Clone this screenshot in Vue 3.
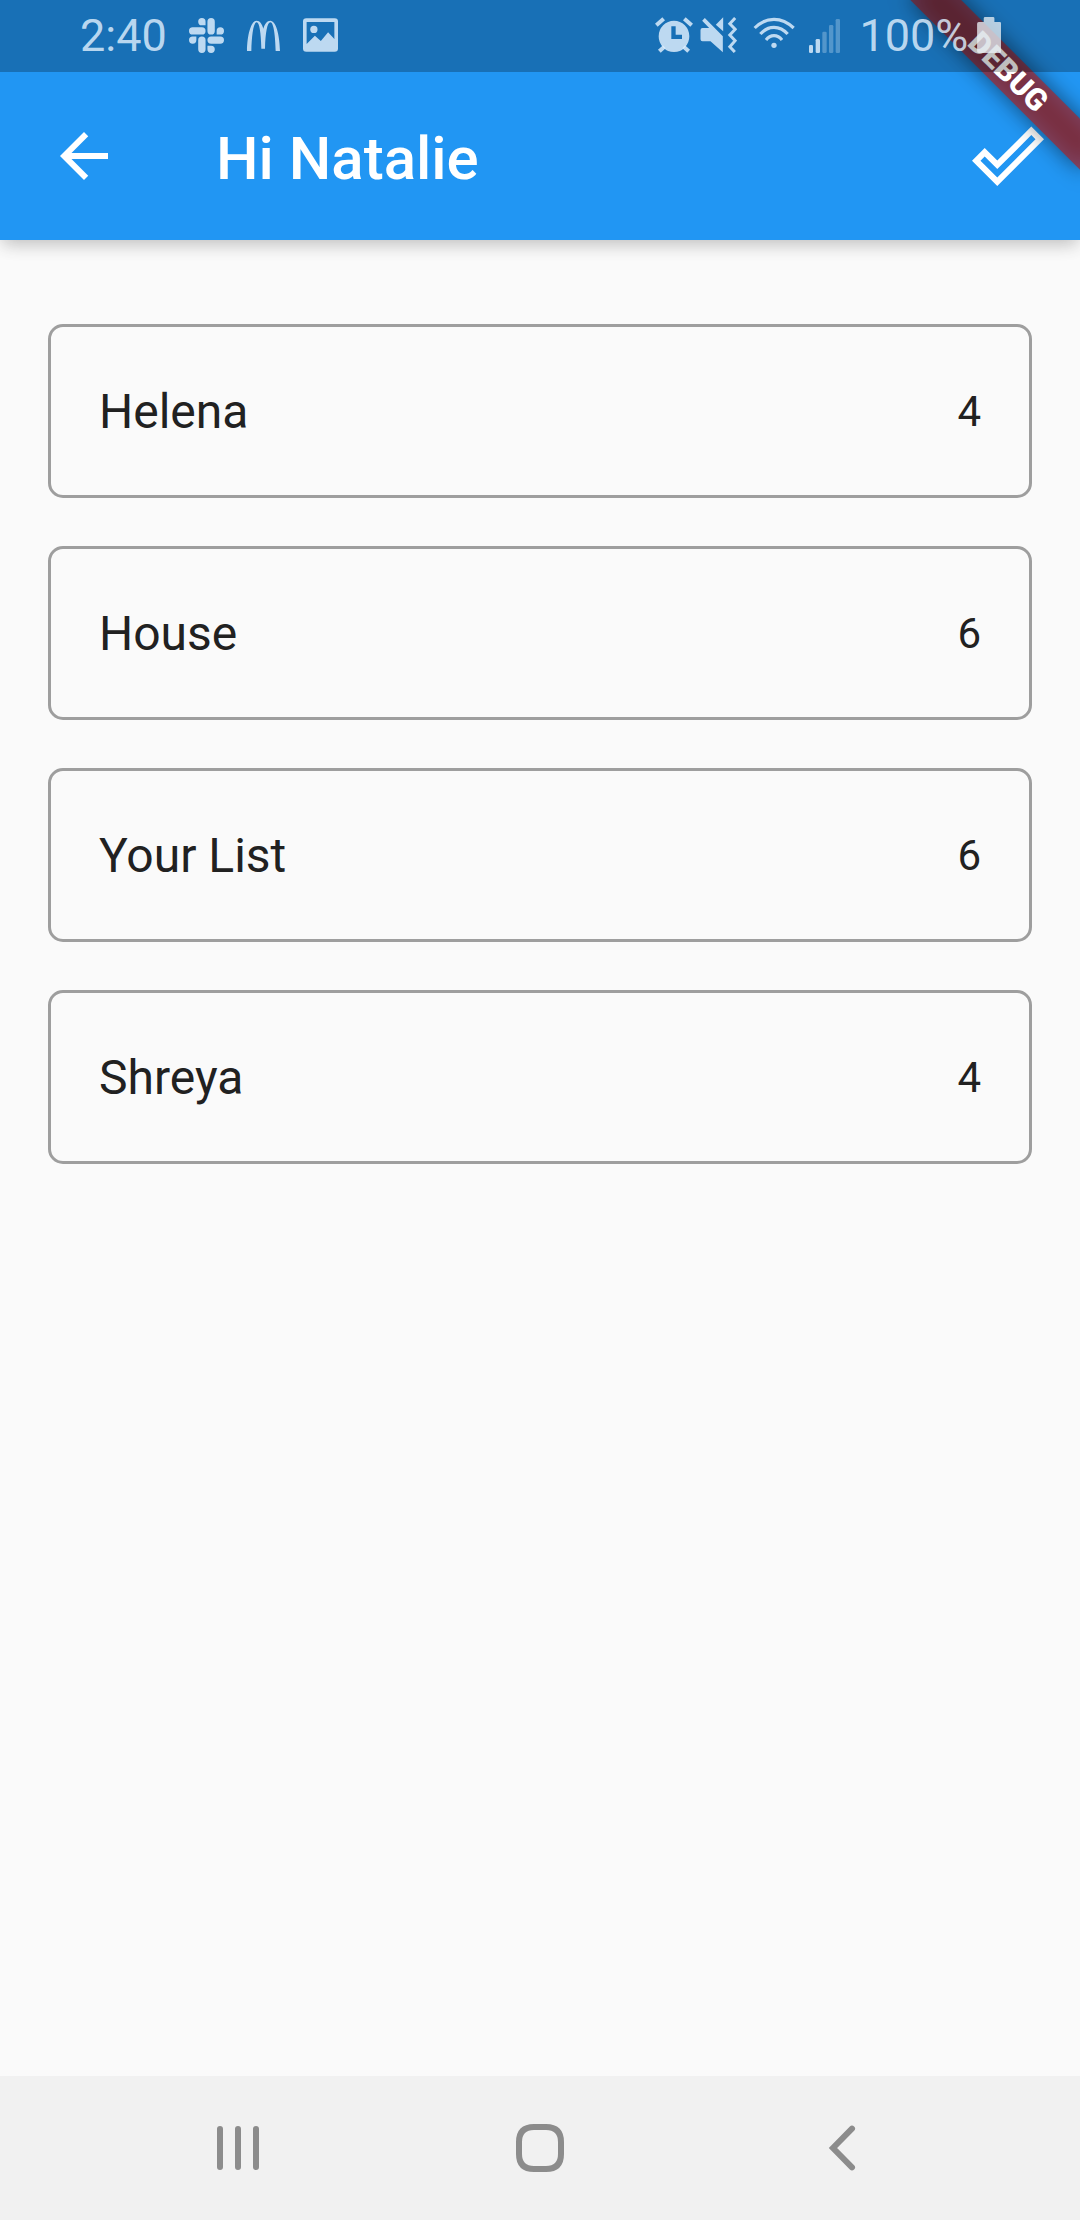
<script setup>
const lists = [
  { name: 'Helena', count: 4 },
  { name: 'House', count: 6 },
  { name: 'Your List', count: 6 },
  { name: 'Shreya', count: 4 },
]
</script>

<template>
  <div class="screen">
    <header class="header">
      <div class="status">
        <span class="time">2:40</span>
        <svg class="slack" viewBox="0 0 24 24" fill="currentColor">
          <path d="M5.042 15.165a2.528 2.528 0 0 1-2.52 2.523A2.528 2.528 0 0 1 0 15.165a2.527 2.527 0 0 1 2.522-2.52h2.52v2.52zM6.313 15.165a2.527 2.527 0 0 1 2.521-2.52 2.527 2.527 0 0 1 2.521 2.52v6.313A2.528 2.528 0 0 1 8.834 24a2.528 2.528 0 0 1-2.521-2.522v-6.313zM8.834 5.042a2.528 2.528 0 0 1-2.521-2.52A2.528 2.528 0 0 1 8.834 0a2.528 2.528 0 0 1 2.521 2.522v2.52H8.834zM8.834 6.313a2.528 2.528 0 0 1 2.521 2.521 2.528 2.528 0 0 1-2.521 2.521H2.522A2.528 2.528 0 0 1 0 8.834a2.528 2.528 0 0 1 2.522-2.521h6.312zM18.956 8.834a2.528 2.528 0 0 1 2.522-2.521A2.528 2.528 0 0 1 24 8.834a2.528 2.528 0 0 1-2.522 2.521h-2.522V8.834zM17.688 8.834a2.528 2.528 0 0 1-2.523 2.521 2.527 2.527 0 0 1-2.52-2.521V2.522A2.527 2.527 0 0 1 15.165 0a2.528 2.528 0 0 1 2.523 2.522v6.312zM15.165 18.956a2.528 2.528 0 0 1 2.523 2.522A2.528 2.528 0 0 1 15.165 24a2.527 2.527 0 0 1-2.52-2.522v-2.522h2.52zM15.165 17.688a2.527 2.527 0 0 1-2.52-2.523 2.526 2.526 0 0 1 2.52-2.52h6.313A2.527 2.527 0 0 1 24 15.165a2.528 2.528 0 0 1-2.522 2.523h-6.313z" />
        </svg>
        <svg class="arches" viewBox="558 54 105 105" fill="currentColor">
          <path d="M561 153C562 104 573 62 590 62C600 62 606 72 610 86C614 72 621 62 631 62C648 62 659 104 660 153H647C646 108 641 67 631 67C622 67 616 98 615 146H604C603 98 598 67 590 67C580 67 575 108 574 153Z" />
        </svg>
        <svg class="photo" viewBox="728 54 106 102" fill="currentColor" fill-rule="evenodd">
          <path d="M738 54H824Q834 54 834 64V146Q834 156 824 156H738Q728 156 728 146V64Q728 54 738 54ZM739 66V132L764 107L782 123L804 97L823 117V66Z" />
          <circle cx="761" cy="88" r="11" />
        </svg>
        <span class="spacer"></span>
        <svg class="alarm" viewBox="42 51 114 108" fill="currentColor" fill-rule="evenodd">
          <path d="M53 109a46 47 0 1 0 92 0a46 47 0 1 0 -92 0ZM91 79H104V104H123V117H91Z" />
          <path d="M46 76L68 56M152 76L130 56M55 154L70 140M143 154L128 140" fill="none" stroke="currentColor" stroke-width="12" />
        </svg>
        <svg class="mute" viewBox="179 51 110 108" fill="currentColor">
          <path d="M186 84H206L185 62L193 54L247 109V157L210 124H186Q180 124 180 118V90Q180 84 186 84ZM226 74L248 52V94Z" />
          <path d="M284 54L268 71L284 88L268 105L284 122L268 140L283 156" fill="none" stroke="currentColor" stroke-width="9" />
        </svg>
        <svg class="wifi" viewBox="336 51 126 96" fill="none" stroke="currentColor" stroke-width="9.5">
          <path d="M341 84Q367 58 399 58T458 84M358 102Q376 82 399 82T440 102M375 120Q385 107 399 107T423 120" />
          <circle cx="399" cy="136" r="8" fill="currentColor" stroke="none" />
        </svg>
        <svg class="signal" viewBox="504 57 93 102" fill="currentColor">
          <rect x="504" y="135" width="12" height="24" rx="4" />
          <rect x="524" y="117" width="13" height="42" rx="4" />
          <g opacity=".36">
            <rect x="544" y="95" width="13" height="64" rx="4" />
            <rect x="564" y="75" width="13" height="84" rx="4" />
            <rect x="584" y="57" width="13" height="102" rx="4" />
          </g>
        </svg>
        <span class="percent">100%</span>
        <svg class="battery" viewBox="408 51 73 108" fill="currentColor">
          <path d="M428 55Q428 51 432 51H456Q460 51 460 55V66H476Q481 66 481 71V154Q481 159 476 159H413Q408 159 408 154V71Q408 66 413 66H428Z" />
        </svg>
      </div>
      <div class="toolbar">
        <svg class="icon" viewBox="0 0 24 24" fill="currentColor">
          <path d="M20 11H7.83l5.59-5.59L12 4l-8 8 8 8 1.41-1.41L7.83 13H20v-2z" />
        </svg>
        <h1 class="title">Hi Natalie</h1>
        <svg class="icon" viewBox="0 0 24 24" fill="currentColor">
          <path d="M19.77 5.03l1.4 1.4L8.43 19.17l-5.6-5.6 1.4-1.4 4.2 4.2L19.77 5.03m0-2.83L8.43 13.54l-4.2-4.2L0 13.57 8.43 22 24 6.43 19.77 2.2z" />
        </svg>
      </div>
      <div class="banner">
        <div class="banner-shadow"></div>
        <div class="banner-face">DEBUG</div>
      </div>
    </header>

    <main class="lists">
      <div v-for="list in lists" :key="list.name" class="card">
        <span class="name">{{ list.name }}</span>
        <span class="count">{{ list.count }}</span>
      </div>
    </main>

    <nav class="nav">
      <svg viewBox="0 0 48 48" fill="none" stroke="currentColor" stroke-width="6" stroke-linecap="round">
        <path d="M6 5V43M24 5V43M42 5V43" />
      </svg>
      <svg viewBox="0 0 48 48" fill="none" stroke="currentColor" stroke-width="6">
        <path d="M18 3H30Q45 3 45 18V30Q45 45 30 45H18Q3 45 3 30V18Q3 3 18 3Z" />
      </svg>
      <svg viewBox="0 0 48 48" fill="none" stroke="currentColor" stroke-width="6" stroke-linecap="round">
        <path d="M34 4.7L15 24L34 43.3" />
      </svg>
    </nav>
  </div>
</template>

<style>
body {
  margin: 0;
}
</style>

<style scoped>
.screen {
  display: flex;
  flex-direction: column;
  width: 1080px;
  height: 2220px;
  overflow: hidden;
  background: #fafafa;
  color: #212121;
  font-family: Roboto, sans-serif;
}
svg {
  display: block;
  flex: none;
}
.header {
  position: relative;
  z-index: 1;
  height: 240px;
  background: #2196f3;
  color: #fff;
  box-shadow: 0 7px 16px -3px rgba(0, 0, 0, 0.2), 0 4px 20px 0 rgba(0, 0, 0, 0.06);
}
.status {
  position: relative;
  z-index: 2;
  display: flex;
  align-items: flex-start;
  box-sizing: border-box;
  height: 72px;
  padding: 0 79px 0 80px;
  background: rgba(0, 0, 0, 0.25);
  color: rgba(222, 238, 253, 0.83);
  font-size: 45px;
  line-height: 72px;
}
.time {
  width: 109px;
}
.slack {
  width: 35px;
  height: 35px;
  margin-top: 18px;
}
.arches {
  width: 35px;
  height: 35px;
  margin: 18px 0 0 22px;
}
.photo {
  width: 35px;
  height: 34px;
  margin: 18px 0 0 22px;
}
.spacer {
  flex: 1;
}
.alarm {
  width: 38px;
  height: 36px;
  margin-top: 17px;
}
.mute {
  width: 37px;
  height: 36px;
  margin: 17px 0 0 7.5px;
}
.wifi {
  width: 42px;
  height: 32px;
  margin: 17px 0 0 15.5px;
}
.signal {
  width: 31px;
  height: 34px;
  margin: 19px 0 0 14px;
}
.percent {
  width: 117px;
  margin-left: 20px;
}
.battery {
  width: 24.5px;
  height: 36px;
  margin-top: 17px;
  color: rgba(234, 240, 246, 0.76);
}
.toolbar {
  display: flex;
  align-items: center;
  height: 168px;
  padding: 0 36px 0 48px;
}
.icon {
  width: 72px;
  height: 72px;
}
.title {
  flex: 1;
  margin: 0;
  padding: 5px 0 0 96px;
  font-size: 60px;
  font-weight: 500;
  line-height: 70px;
}
.banner {
  position: absolute;
  top: 0;
  right: 0;
  width: 240px;
  height: 260px;
  overflow: hidden;
}
.banner-shadow,
.banner-face {
  position: absolute;
  top: 84px;
  left: 120px;
  width: 240px;
  height: 36px;
  transform: rotate(45deg);
  transform-origin: 120px -84px;
}
.banner-shadow {
  background: rgba(0, 0, 0, 0.5);
  filter: blur(11px);
}
.banner-face {
  background: rgba(183, 28, 28, 0.627);
  font-size: 30.6px;
  font-weight: 900;
  line-height: 36px;
  text-align: center;
}
.lists {
  display: flex;
  flex: 1;
  flex-direction: column;
  gap: 48px;
  padding: 84px 48px 0;
}
.card {
  display: flex;
  align-items: center;
  justify-content: space-between;
  box-sizing: border-box;
  height: 174px;
  padding: 0 48px;
  border: 3px solid #9e9e9e;
  border-radius: 15px;
}
.name {
  font-size: 48px;
}
.count {
  font-size: 42px;
}
.nav {
  display: flex;
  align-items: center;
  justify-content: space-between;
  box-sizing: border-box;
  height: 144px;
  padding: 0 214px;
  background: #f1f1f1;
  color: #8c8c8c;
}
.nav svg {
  width: 48px;
  height: 48px;
}
</style>
